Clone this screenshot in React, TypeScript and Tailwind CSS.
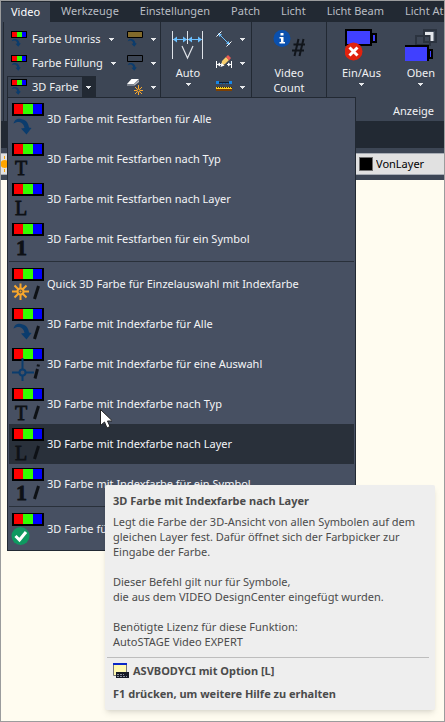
import type { ReactNode } from 'react';

const tabs = ['Werkzeuge', 'Einstellungen', 'Patch', 'Licht', 'Licht Beam', 'Licht At'];

type Mark = 'arrow' | 'T' | 'L' | '1' | 'star' | 'cross' | 'check';

const menuGroups: { label: string; mark: Mark; indexed?: boolean; active?: boolean }[][] = [
  [
    { label: '3D Farbe mit Festfarben für Alle', mark: 'arrow' },
    { label: '3D Farbe mit Festfarben nach Typ', mark: 'T' },
    { label: '3D Farbe mit Festfarben nach Layer', mark: 'L' },
    { label: '3D Farbe mit Festfarben für ein Symbol', mark: '1' },
  ],
  [
    { label: 'Quick 3D Farbe für Einzelauswahl mit Indexfarbe', mark: 'star', indexed: true },
    { label: '3D Farbe mit Indexfarbe für Alle', mark: 'arrow', indexed: true },
    { label: '3D Farbe mit Indexfarbe für eine Auswahl', mark: 'cross', indexed: true },
    { label: '3D Farbe mit Indexfarbe nach Typ', mark: 'T', indexed: true },
    { label: '3D Farbe mit Indexfarbe nach Layer', mark: 'L', indexed: true, active: true },
    { label: '3D Farbe mit Indexfarbe für ein Symbol', mark: '1', indexed: true },
  ],
  [{ label: '3D Farbe fü', mark: 'check' }],
];

function Caret() {
  return (
    <svg viewBox="0 0 5 3" className="h-[3px] w-[5px] shrink-0" shapeRendering="crispEdges">
      <path d="M0 0h5v1H4v1H3v1H2V2H1V1H0z" fill="#e6e8eb" />
    </svg>
  );
}

function Star() {
  return (
    <g stroke="#f9a72c" strokeWidth="2" fill="none">
      <path d="M8.500 15.500V32M0 23.500h17M2.500 17.500l12 12M14.500 17.500l-12 12" />
      <circle cx="8.500" cy="23.500" r="3" fill="#5b5347" />
      <circle cx="8.500" cy="23.500" r="1" fill="#f9a72c" stroke="none" />
    </g>
  );
}

function MarkShape({ mark }: { mark: Mark }) {
  switch (mark) {
    case 'arrow':
      return (
        <path
          d="M1.500 20.500C3 16 6 15.500 9 16c5 .8 7.500 4 8 8.500l2.500.5-5 6.500L9 25.500l3.500-.5C12 21.500 10 19.500 7.500 19c-2-.4-4 .2-6 1.500z"
          fill="#0b3c6d"
        />
      );
    case 'star':
      return <Star />;
    case 'cross':
      return (
        <g stroke="#0b3c6d" strokeWidth="2" fill="none">
          <path d="M10.500 10v11M10.500 27v6M0 24.500h7M14 24.500h8" />
          <circle cx="10.500" cy="24.500" r="3" />
        </g>
      );
    case 'check':
      return (
        <g>
          <circle cx="8.500" cy="23" r="9" fill="#0f9960" />
          <path d="M3.500 23l4 4 6.500-8" stroke="#fff" strokeWidth="3" fill="none" />
        </g>
      );
    default:
      return (
        <text
          x={mark === '1' ? 4 : 3}
          y="32"
          fontSize={mark === '1' ? 22 : 20}
          fontWeight={mark === '1' ? 'bold' : 'normal'}
          fontFamily="Liberation Serif, serif"
          fill="#0e1116"
          stroke="#0e1116"
          strokeWidth=".8"
        >
          {mark}
        </text>
      );
  }
}

function ColorIcon({ mark, indexed, className }: { mark: Mark; indexed?: boolean; className: string }) {
  return (
    <svg viewBox="0 0 32 32" overflow="visible" className={className}>
      <path d="M0 0h32v13H0z" fill="#000" />
      <path d="M2 1h9v10H2z" fill="#f00" />
      <path d="M11 1h10v10H11z" fill="#3f0" />
      <path d="M21 1h9v10h-9z" fill="#00f" />
      <MarkShape mark={mark} />
      {indexed && (
        <path
          d={mark === 'cross' ? 'M26.500 16.500l-.5 2M25.500 21l-2.500 9.500' : 'M26.500 18l-4 13'}
          stroke="#0e1116"
          strokeWidth="3"
          fill="none"
        />
      )}
    </svg>
  );
}

// Toolbar variant with a taller swatch
function SmallColorIcon() {
  return (
    <svg viewBox="0 0 32 32" className="size-4 shrink-0">
      <path d="M0 0h32v14H0z" fill="#000" />
      <path d="M2 2h10v10H2z" fill="#f00" />
      <path d="M12 2h10v10H12z" fill="#3f0" />
      <path d="M22 2h8v10h-8z" fill="#00f" />
      <MarkShape mark="arrow" />
    </svg>
  );
}

function BoxIcon({ fill }: { fill: string }) {
  return (
    <svg viewBox="0 0 32 32" className="size-4 shrink-0">
      <path d="M1 1h30v12H1z" fill={fill} stroke="#000" strokeWidth="2" />
      <MarkShape mark="arrow" />
    </svg>
  );
}

function EraseIcon() {
  return (
    <svg viewBox="0 0 16 16" className="size-4 shrink-0">
      <path d="M4.500 0H12L7 5H0z" fill="#fff" />
      <path d="M0 5.500h7L12 1v2L7.500 6.500H0z" fill="#b9bcc2" />
      <g stroke="#f9a72c" strokeWidth="1">
        <path d="M11.500 6v10M7 11.500h9M8 8l7 7M15 8l-7 7" />
      </g>
      <circle cx="11.500" cy="11.500" r="1.500" fill="#3d4655" stroke="#f9a72c" />
    </svg>
  );
}

function AutoIcon() {
  return (
    <svg viewBox="0 0 32 32" className="size-8">
      <path d="M.5 2v28M15.500 2v13M30.500 2v28" stroke="#dfe3e8" />
      <path d="M1 10.500h14M16 10.500h14" stroke="#6cc0ff" />
      <path
        d="M1 10.500l4-3v6zM15 10.500l-4-3v6zM16 10.500l4-3v6zM30 10.500l-4-3v6z"
        fill="#6cc0ff"
      />
      <path d="M10 17l5.500 12L21 17" stroke="#dfe3e8" strokeWidth="1.200" fill="none" />
    </svg>
  );
}

function DimensionIcon() {
  return (
    <svg viewBox="0 0 16 16" className="size-4 shrink-0">
      <path d="M3.500 3.500l9 9" stroke="#6cc0ff" />
      <path d="M2 2l4 1.500L3.500 6zM14 14l-4-1.500 2.500-2.500z" fill="#6cc0ff" />
      <path d="M.5 5.500l5-5M10.500 15.500l5-5" stroke="#fff" />
    </svg>
  );
}

function EditDimensionIcon() {
  return (
    <svg viewBox="0 0 16 16" className="size-4 shrink-0">
      <path d="M.5 6v7M15.500 6v7M1 9.500h4M11 9.500h4" stroke="#fff" fill="none" />
      <path d="M1 9.500l3-2v4zM15 9.500l-3-2v4z" fill="#fff" />
      <path d="M6 6l4-4 3 3-4 4-4 2z" fill="#f8cf6e" />
      <path d="M10 2l2-2 3 3-2 2.500z" fill="#ec5a52" />
      <path d="M4.500 12l1-4 3 2.500z" fill="#fff" />
    </svg>
  );
}

function RulerIcon() {
  return (
    <svg viewBox="0 0 16 16" className="size-4 shrink-0" shapeRendering="crispEdges">
      <path d="M0 2h3v3H0zM13 2h3v3h-3z" fill="#1687e8" />
      <path d="M3 3.500h10" stroke="#0b1c33" />
      <path d="M4 4.500h8" stroke="#1d63a8" strokeDasharray="2 1" />
      <path d="M0 8h16v2H0z" fill="#ffd21f" />
      <path d="M1.500 8v1M3.500 8v1M5.500 8v1M7.500 8v1M9.500 8v1M11.500 8v1M13.500 8v1M15.500 8v1" stroke="#3a2a10" />
      <path d="M0 10h16v2H0z" fill="#7b3f05" />
    </svg>
  );
}

function CountIcon() {
  return (
    <svg viewBox="0 0 32 32" className="size-8">
      <circle cx="9" cy="9.500" r="8.500" fill="#0a50ae" />
      <path d="M7.500 4h3v2.500h-3zM6.500 8h4v5H12v1.500H6.500V13H8V9.500H6.500z" fill="#fff" />
      <path d="M25.500 10L21.500 27M30.500 10l-4 17M20.500 15.500H32M19 21.500h12" stroke="#11151b" strokeWidth="2" />
    </svg>
  );
}

function OnOffIcon() {
  return (
    <svg viewBox="0 0 32 32" className="size-8">
      <path d="M1 1h25v15H1zM27 5h4v8h-4z" fill="#4040ff" stroke="#000" strokeWidth="2" />
      <circle cx="8.500" cy="22.500" r="9" fill="#e0220e" />
      <path d="M4.500 18.500l8 8M12.500 18.500l-8 8" stroke="#fff" strokeWidth="3" />
    </svg>
  );
}

function FrontIcon() {
  return (
    <svg viewBox="0 0 32 32" className="size-8">
      <path d="M19 1h12v12H19zM11 7h14v9H11z" stroke="#2b333f" strokeWidth="2" fill="none" />
      <path d="M20 4.500h7V12" stroke="#e4e7ec" strokeWidth="3" fill="none" />
      <path d="M-2 17h25v16H-2zM24 21h3v8h-3z" fill="#4040ff" stroke="#000" strokeWidth="2" />
    </svg>
  );
}

function BigButton({ icon, label, caret }: { icon: ReactNode; label: string; caret?: boolean }) {
  return (
    <button className="flex flex-col items-center">
      {icon}
      <span className="mt-1 text-center leading-[15px] whitespace-pre-line">{label}</span>
      {caret && (
        <span className="mt-[3px]">
          <Caret />
        </span>
      )}
    </button>
  );
}

function SmallButton({ icon, label, title }: { icon: ReactNode; label?: string; title?: string }) {
  return (
    <button aria-label={title} className="flex h-6 items-center">
      {icon}
      {label && <span className="pl-[5px]">{label}</span>}
      <span className="ml-2">
        <Caret />
      </span>
    </button>
  );
}

function Ribbon() {
  return (
    <div className="flex h-[99px] bg-[#3d4655] pl-[2px] text-[11px] text-[#f0f1f3]">
      <div className="flex w-[158px] shrink-0 justify-between border-x border-[#222933] pt-[5px] pr-1">
        <div className="flex flex-col items-start">
          <div className="pl-[7px]">
            <SmallButton icon={<SmallColorIcon />} label="Farbe Umriss" />
            <SmallButton icon={<SmallColorIcon />} label="Farbe Füllung" />
          </div>
          <div className="mt-px ml-[3px] flex h-[22px] border border-[#222933]">
            <button className="flex items-center gap-[5px] px-[3px]">
              <SmallColorIcon />
              3D Farbe
            </button>
            <button aria-label="3D Farbe Auswahl" className="flex w-[13px] items-center justify-center bg-[#222933]">
              <Caret />
            </button>
          </div>
        </div>
        <div className="flex flex-col">
          <SmallButton icon={<BoxIcon fill="#826a2b" />} title="Füllfarbe" />
          <SmallButton icon={<BoxIcon fill="#3d4655" />} title="Keine Farbe" />
          <SmallButton icon={<EraseIcon />} title="Farbe entfernen" />
        </div>
      </div>

      <div className="flex w-[91px] shrink-0 justify-between border-r border-[#222933] pt-[5px] pr-[6px] pl-[11px]">
        <div className="pt-[2px]">
          <BigButton icon={<AutoIcon />} label="Auto" caret />
        </div>
        <div className="flex flex-col">
          <SmallButton icon={<DimensionIcon />} title="Bemaßung" />
          <SmallButton icon={<EditDimensionIcon />} title="Bemaßung bearbeiten" />
          <SmallButton icon={<RulerIcon />} title="Lineal" />
        </div>
      </div>

      <div className="flex w-[75px] shrink-0 justify-center border-r border-[#222933] pt-[7px]">
        <BigButton icon={<CountIcon />} label={'Video\nCount'} />
      </div>

      <div className="flex grow flex-col pt-[7px]">
        <div className="flex gap-6 pl-[15px]">
          <BigButton icon={<OnOffIcon />} label="Ein/Aus" caret />
          <BigButton icon={<FrontIcon />} label="Oben" caret />
        </div>
        <div className="mt-auto pb-[2px] pl-[66px]">Anzeige</div>
      </div>
    </div>
  );
}

function LayerBar() {
  return (
    <div className="flex h-8 items-center justify-between bg-[#3d4655]">
      <button aria-label="Layer sichtbar" className="h-[22px] w-2 overflow-hidden border-y border-[#a8adb5] bg-[#e1e1e1]">
        <svg viewBox="0 0 8 20" className="h-5 w-2">
          <circle cx="3.500" cy="10" r="4" fill="#ffa500" />
          <path d="M3.500 2v3M3.500 15v3" stroke="#ffa500" />
        </svg>
      </button>
      <label className="flex h-[22px] w-[90px] items-center gap-[3px] border-y border-[#a8adb5] bg-[#e1e1e1] pl-[5px]">
        <span className="size-[14px] shrink-0 border border-[#707070] bg-black" />
        <select
          aria-label="Farbe"
          className="min-w-0 grow appearance-none bg-transparent text-[11px] text-black outline-none"
        >
          <option>VonLayer</option>
        </select>
      </label>
    </div>
  );
}

function ColorMenu() {
  return (
    <div
      role="menu"
      className="absolute top-24 left-[6px] w-[349px] border border-[#222933] bg-[#475062] p-px text-[11px] text-[#f4f5f7]"
    >
      {menuGroups.map((group, i) => (
        <div key={i}>
          {i > 0 && (
            <div className="flex h-[5px] items-center">
              <hr className="w-full border-[#29303a]" />
            </div>
          )}
          {group.map((item) => (
            <button
              key={item.label}
              role="menuitem"
              className={`flex h-10 w-full items-center gap-[3px] pl-[3px] whitespace-nowrap ${
                item.active ? 'bg-[#29303a]' : ''
              }`}
            >
              <ColorIcon mark={item.mark} indexed={item.indexed} className="size-8 shrink-0" />
              {item.label}
            </button>
          ))}
        </div>
      ))}
    </div>
  );
}

function Tooltip() {
  return (
    <div
      role="tooltip"
      className="absolute top-[484px] left-[104px] w-[330px] rounded-xs bg-[#eeeeee] pb-2 text-[11px] text-[#4b4b4b] shadow-md"
    >
      <h2 className="px-2 pt-2 leading-4 font-bold">3D Farbe mit Indexfarbe nach Layer</h2>
      <div className="mt-[5px] px-2 leading-[15px] whitespace-nowrap">
        <p>
          Legt die Farbe der 3D-Ansicht von allen Symbolen auf dem
          <br />
          gleichen Layer fest. Dafür öffnet sich der Farbpicker zur
          <br />
          Eingabe der Farbe.
        </p>
        <p className="mt-[15px]">
          Dieser Befehl gilt nur für Symbole,
          <br />
          die aus dem VIDEO DesignCenter eingefügt wurden.
        </p>
        <p className="mt-[15px]">
          Benötigte Lizenz für diese Funktion:
          <br />
          AutoSTAGE Video EXPERT
        </p>
      </div>
      <hr className="mt-2 mr-[6px] ml-[2px] border-[#bdbdbd]" />
      <div className="mt-[5px] flex items-center gap-1 px-2 leading-4 font-bold">
        <svg viewBox="0 0 16 16" className="size-4">
          <path d="M.5.500h13v12H.5z" fill="#fff9b0" stroke="#777" />
          <path d="M0 0h14v2H0z" fill="#0a28c8" />
          <path d="M3 9h13v6H3z" fill="#161a26" />
          <path d="M4 11.500h7M4 13.500h10" stroke="#8a90a0" strokeDasharray="2 1" />
        </svg>
        ASVBODYCI mit Option [L]
      </div>
      <p className="mt-[7px] px-2 leading-4 font-bold">F1 drücken, um weitere Hilfe zu erhalten</p>
    </div>
  );
}

export default function App() {
  return (
    <div className="relative flex min-h-screen flex-col overflow-hidden border border-[#9b9c9d] bg-[#fffcf0] font-['Noto_Sans',sans-serif]">
      <nav className="flex h-[21px] gap-px bg-[#222933] text-[11px] whitespace-nowrap text-[#b9bdc3]">
        <button className="mt-px bg-[#3d4655] px-[10px] text-white">Video</button>
        {tabs.map((tab) => (
          <button key={tab} className="px-[10px]">
            {tab}
          </button>
        ))}
      </nav>
      <Ribbon />
      <div className="h-[27px] bg-[#222933]" />
      <LayerBar />
      <main className="grow" />
      <ColorMenu />
      <Tooltip />
      <svg viewBox="0 0 12 20" className="absolute top-[408px] left-[99px] h-5 w-3">
        <path d="M.5.500v16l4-3.500 2.500 6 3-1.500-2.500-5.500h5z" fill="#fff" stroke="#222" />
      </svg>
    </div>
  );
}
